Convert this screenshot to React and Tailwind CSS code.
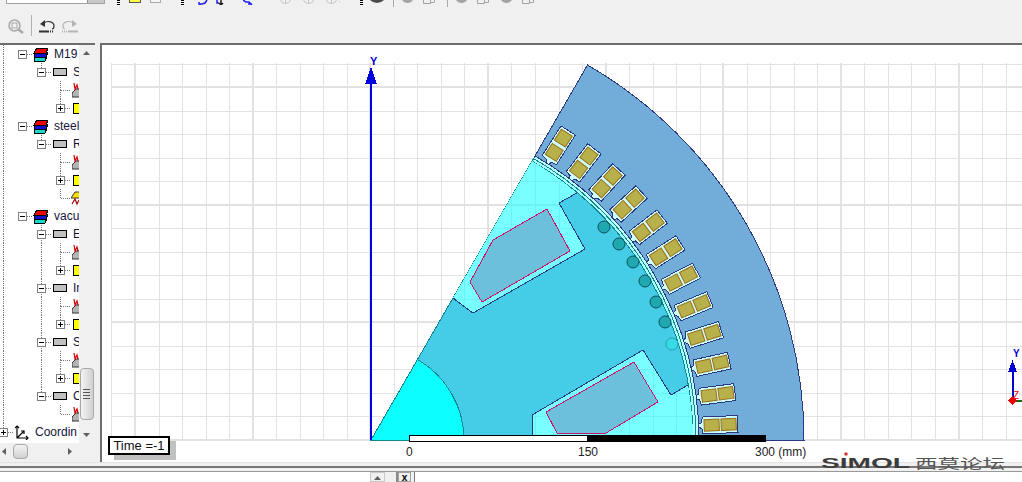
import React from "react";

const CX = 371;
const CY = 440;
const STEP = 23.53;
const font = { fontFamily: '"Liberation Sans", Arial, sans-serif' };

const sector = (r) => {
  const x = CX + r * Math.cos(Math.PI / 3);
  const y = CY - r * Math.sin(Math.PI / 3);
  return `M${CX} ${CY} L${CX + r} ${CY} A${r} ${r} 0 0 0 ${x} ${y} Z`;
};

const upperPocket = "M453 298 L532 161.1 A322 322 0 0 1 577 193 L559 203 L585 249 L473 313 Z";
const lowerPocket = "M533 440 L532 415 L643 350 L671 395 L688 385 A322 322 0 0 1 693 440 Z";

const slotAngles = [2.5, 7.5, 12.5, 17.5, 22.5, 27.5, 32.5, 37.5, 42.5, 47.5, 52.5, 57.5];
const holes = [
  [604, 227],
  [619, 244],
  [633, 262],
  [645, 281],
  [656, 302],
  [665, 322],
];

const gridX = Array.from({ length: 39 }, (_, i) => i - 1);
const gridY = Array.from({ length: 17 }, (_, i) => i);

const GridLines = ({ color }) => (
  <g stroke={color}>
    {gridX.map((k) => (
      <line
        key={"x" + k}
        x1={Math.round(135 + k * STEP) + (k % 5 === 0 ? 0 : 0.5)}
        x2={Math.round(135 + k * STEP) + (k % 5 === 0 ? 0 : 0.5)}
        y1="63"
        y2="441"
        strokeWidth={k % 5 === 0 ? 2 : 1}
      />
    ))}
    {gridY.map((k) => (
      <line
        key={"y" + k}
        x1="111"
        x2="1022"
        y1={Math.round(CY - k * STEP) + (k % 5 === 0 ? 0 : 0.5)}
        y2={Math.round(CY - k * STEP) + (k % 5 === 0 ? 0 : 0.5)}
        strokeWidth={k % 5 === 0 ? 2 : 1}
      />
    ))}
  </g>
);

// coils get shorter and wider towards the top of the section
const Slot = ({ angle }) => {
  const t = (angle - 2.5) / 55;
  const len = 15 - t * 2;
  const wid = 11.5 + t * 1.5;
  return (
    <g transform={`translate(${CX} ${CY}) rotate(${-angle})`}>
      <polygon
        points="328,-1.5 331,-3 332,-8.5 367,-8.5 367,8.5 332,8.5 331,3 328,1.5"
        fill="#ccffff"
        stroke="#2b3a80"
      />
      <g shapeRendering="auto">
        <rect x={341 - len / 2} y={-wid / 2} width={len} height={wid} fill="#b8b04a" stroke="#9a6c14" />
        <rect x={358 - len / 2} y={-wid / 2} width={len} height={wid} fill="#b8b04a" stroke="#9a6c14" />
      </g>
    </g>
  );
};

// the motor section, axes and scale, all in page coordinates
const Drawing = () => (
  <svg
    className="block w-[920px] h-[417px]"
    viewBox="102 45 920 417"
    shapeRendering="crispEdges"
  >
    <defs>
      <clipPath id="pockets">
        <path d={upperPocket} />
        <path d={lowerPocket} />
      </clipPath>
    </defs>
    <GridLines color="#e2e2e2" />

    <path d={sector(433)} fill="#72acd9" stroke="#2b3a80" />
    {slotAngles.map((a) => (
      <Slot key={a} angle={a} />
    ))}
    <path d={sector(328)} fill="#b8ffff" stroke="#2b3a80" />
    <path d={sector(325)} fill="#a8ffff" stroke="#10868e" />
    <path d={sector(322)} fill="#45cde8" stroke="#10868e" />

    <path d={upperPocket} fill="#78ffff" />
    <path d={lowerPocket} fill="#78ffff" />
    <g clipPath="url(#pockets)">
      <GridLines color="#6cf2f4" />
    </g>
    <polyline points="453,298 473,313 585,249 559,203 577,193" fill="none" stroke="#2b3a80" />
    <polyline points="533,440 532,415 643,350 671,395 688,385" fill="none" stroke="#2b3a80" />
    <polygon points="547,209 570,251 482,302 470,282 493,240" fill="#6cc0dc" stroke="#d0106a" />
    <polygon points="634,362 658,402 606,433 557,433 546,412" fill="#6cc0dc" stroke="#d0106a" />

    <path d={sector(93)} fill="#0cffff" stroke="#10868e" />

    <g shapeRendering="auto">
      {holes.map(([x, y]) => (
        <circle key={x} cx={x} cy={y} r="6" fill="#20a8b0" stroke="#0c4f5c" />
      ))}
      <circle cx="672" cy="344" r="6" fill="#38dce6" stroke="#20a0a8" />
    </g>

    <line x1="371" x2="371" y1="80" y2="440" stroke="#0000e0" strokeWidth="2" />
    <polygon points="371,67 377,84 365,84" fill="#0000e0" />
    <text x="370" y="65" fontSize="11" fontWeight="700" fill="#0000e0" style={font} shapeRendering="auto">
      Y
    </text>

    <rect x="409.5" y="435.5" width="178" height="6" fill="#fff" stroke="#000" />
    <rect x="588" y="435" width="178" height="7" fill="#000" />
    <g fontSize="12" fill="#222" style={font}>
      <text x="406" y="456">0</text>
      <text x="578" y="456">150</text>
      <text x="755" y="456">300 (mm)</text>
    </g>

    <line x1="1012" x2="1022" y1="400.5" y2="400.5" stroke="#0a6b0a" strokeWidth="2" />
    <line x1="1012.5" x2="1012.5" y1="368" y2="400" stroke="#0000d0" strokeWidth="2" />
    <polygon points="1012.5,360 1017,372 1008,372" fill="#0000d0" />
    <polygon points="1012.5,396 1017,400.5 1012.5,405 1008,400.5" fill="#f00000" />
    <text x="1013" y="357" fontSize="10" fontWeight="700" fill="#0000d0" style={font}>Y</text>
    <text x="1013" y="399" fontSize="10" fill="#f00000" style={font}>Z</text>
  </svg>
);

const Cell = ({ kind = "" }) => (
  <div className="relative w-[19px] h-[18px] shrink-0">
    {kind.includes("u") && <div className="absolute left-[9px] top-0 h-[9px] border-l border-dotted border-[#777]" />}
    {kind.includes("d") && <div className="absolute left-[9px] top-[9px] h-[9px] border-l border-dotted border-[#777]" />}
    {kind.includes("r") && <div className="absolute left-[10px] top-[9px] w-[9px] border-t border-dotted border-[#777]" />}
    {(kind.includes("m") || kind.includes("p")) && (
      <div className="absolute left-[5px] top-[5px] w-[9px] h-[9px] bg-white border border-[#808080] flex items-center justify-center">
        <div className="relative w-[5px] h-[5px]">
          <div className="absolute left-0 top-[2px] w-[5px] h-[1px] bg-black" />
          {kind.includes("p") && <div className="absolute left-[2px] top-0 w-[1px] h-[5px] bg-black" />}
        </div>
      </div>
    )}
  </div>
);

const MaterialIcon = () => (
  <svg className="w-[16px] h-[15px] shrink-0 ml-[1px]" viewBox="0 0 16 15" shapeRendering="crispEdges">
    <polygon points="1,10 3,9 14,9 12,14 1,14" fill="#18d8c8" stroke="#000" />
    <polygon points="1,7 3,5 15,5 13,10 1,10" fill="#1010d0" stroke="#000" />
    <polygon points="1,6 4,1 15,1 13,6" fill="#f00000" stroke="#000" />
  </svg>
);

const GrayRect = () => <div className="w-[14px] h-[8px] ml-[2px] shrink-0 bg-[#c0c0c0] border border-black" />;

const WaveIcon = () => (
  <svg className="w-[16px] h-[16px] ml-[2px] shrink-0" viewBox="0 0 16 16">
    <polygon points="0,15 0,11 4,7 14,7 14,15" fill="#b4b4b4" stroke="#333" />
    <polyline points="2,1 3,7 5,3 6,7" fill="none" stroke="#d00000" strokeWidth="1.2" />
  </svg>
);

const YellowIcon = () => <div className="w-[14px] h-[11px] ml-[3px] shrink-0 bg-[#ffff00] border border-black" />;

const SweepIcon = () => (
  <svg className="w-[16px] h-[16px] ml-[1px] shrink-0" viewBox="0 0 16 16">
    <polygon points="0,8 4,2 9,2 9,8" fill="#ffe000" stroke="#333" />
    <polyline points="1,14 4,9 6,14 8,10" fill="none" stroke="#a00000" strokeWidth="1.2" />
  </svg>
);

const AxesIcon = () => (
  <svg className="w-[14px] h-[15px] ml-[2px] shrink-0" viewBox="0 0 14 15" fill="none" stroke="#000" strokeWidth="1.2">
    <path d="M2 1 L2 13 L13 13 M2 13 L9 6" />
    <path d="M0 3 L2 1 L4 3 M11 11 L13 13 L11 15 M6 6 L9 6 L9 9" />
  </svg>
);

const Label = ({ gap, children }) => (
  <span className={`${gap} text-[12px] leading-[18px] text-[#14143c] whitespace-nowrap`} style={font}>
    {children}
  </span>
);

const Leaves = ({ col2, last }) => (
  <>
    <div className="flex h-[18px] items-center">
      <Cell kind="ud" />
      <Cell />
      <Cell kind={col2} />
      <Cell kind="udr" />
      <WaveIcon />
    </div>
    <div className="flex h-[18px] items-center">
      <Cell kind="ud" />
      <Cell />
      <Cell kind={last ? "" : col2} />
      <Cell kind="upr" />
      <YellowIcon />
    </div>
  </>
);

const Part = ({ name, kind }) => (
  <div className="flex h-[18px] items-center">
    <Cell kind="ud" />
    <Cell />
    <Cell kind={kind} />
    <GrayRect />
    <Label gap="ml-[6px]">{name}</Label>
  </div>
);

const Material = ({ name }) => (
  <div className="flex h-[18px] items-center">
    <Cell kind="ud" />
    <Cell kind="mr" />
    <MaterialIcon />
    <Label gap="ml-[5px]">{name}</Label>
  </div>
);

const Tree = () => (
  <div className="w-[79px] h-[398px] overflow-hidden bg-white">
    <div className="ml-[-6px]">
      <Material name="M19" />
      <Part name="S" kind="umr" />
      <Leaves col2="" last />
      <Material name="steel" />
      <Part name="R" kind="umr" />
      <Leaves col2="" last />
      <div className="flex h-[18px] items-center">
        <Cell kind="ud" />
        <Cell />
        <Cell />
        <Cell kind="ur" />
        <SweepIcon />
      </div>
      <Material name="vacu" />
      <Part name="E" kind="umrd" />
      <Leaves col2="ud" />
      <Part name="In" kind="umrd" />
      <Leaves col2="ud" />
      <Part name="S" kind="umrd" />
      <Leaves col2="ud" />
      <Part name="C" kind="umr" />
      <div className="flex h-[18px] items-center">
        <Cell kind="ud" />
        <Cell />
        <Cell />
        <Cell kind="ur" />
        <WaveIcon />
      </div>
      <div className="flex h-[18px] items-center">
        <Cell kind="upr" />
        <AxesIcon />
        <Label gap="ml-[6px]">Coordin</Label>
      </div>
    </div>
  </div>
);

const Arrow = ({ dir, className = "" }) => {
  const points = {
    up: "0,4 7,4 3.5,0",
    down: "0,0 7,0 3.5,4",
    left: "4,0 4,7 0,3.5",
    right: "0,0 0,7 4,3.5",
  }[dir];
  const box = dir === "up" || dir === "down" ? "w-[7px] h-[4px]" : "w-[4px] h-[7px]";
  return (
    <svg className={`${box} shrink-0 ${className}`} viewBox={dir === "up" || dir === "down" ? "0 0 7 4" : "0 0 4 7"}>
      <polygon points={points} fill="#606060" />
    </svg>
  );
};

const Grip = ({ className }) => (
  <div className={`${className} w-[3px] flex flex-col gap-[1px] shrink-0`}>
    <div className="h-[1px] bg-black" />
    <div className="h-[1px] bg-black" />
    <div className="h-[1px] bg-black" />
  </div>
);

// disabled tool buttons: only the lower edge of each shows in this strip
const GrayRing = ({ className }) => (
  <svg className={`${className} h-[4px] shrink-0`} viewBox="0 0 11 4" fill="none" stroke="#c4c4c4">
    <path d="M0.5 0 Q1.5 3.5 5.5 3.5 Q9.5 3.5 10.5 0 M5.5 0 V3.5" />
  </svg>
);

const GrayCap = ({ className }) => (
  <svg className={`${className} h-[3px] shrink-0`} viewBox="0 0 11 3">
    <path d="M0 0 H11 Q9 3 5.5 3 Q2 3 0 0 Z" fill="#a4a4a4" />
  </svg>
);

const GrayDoc = ({ className }) => (
  <svg className={`${className} h-[4px] shrink-0`} viewBox="0 0 12 4" fill="none" stroke="#a4a4a4">
    <path d="M0.5 0 V3.5 H7.5 V0 M7.5 2.5 H11.5 V0" />
  </svg>
);

const TopStrip = () => (
  <div className="flex items-start h-[9px] overflow-hidden">
    <div className="ml-[6px] w-[99px] h-[4px] bg-white border-b border-x border-[#a0a0a0] flex justify-end">
      <div className="w-[17px] h-[3px] bg-[#c8c8c8] border-l border-[#909090]" />
    </div>
    <Grip className="ml-[12px]" />
    <div className="ml-[9px] w-[12px] h-[3px] bg-[#ffff40] border-b border-x border-[#555]" />
    <div className="ml-[9px] w-[11px] h-[3px] bg-[#f4f4f4] border-b border-x border-[#aaa]" />
    <Grip className="ml-[20px]" />
    <svg className="ml-[14px] w-[10px] h-[5px] shrink-0" viewBox="0 0 10 5" fill="none" stroke="#2020f0" strokeWidth="1.5">
      <path d="M1 4 L4 4 M9 0 L7 3 L4 4 M1 2 L1 4 L3 5" />
    </svg>
    <svg className="ml-[8px] w-[8px] h-[5px] shrink-0" viewBox="0 0 8 5" fill="none" strokeWidth="1.5">
      <path d="M1 0 V3 H3" stroke="#2020f0" />
      <path d="M5 0 V4 M3 3 L5 5 L7 3" stroke="#202020" />
    </svg>
    <svg className="ml-[19px] w-[10px] h-[5px] shrink-0" viewBox="0 0 10 5" fill="none" stroke="#2020f0" strokeWidth="1.5">
      <path d="M0 0 L3 2 L6 2 L9 5 M5 4 L9 4" />
    </svg>
    <GrayRing className="ml-[27px] w-[11px]" />
    <GrayRing className="ml-[12px] w-[11px]" />
    <GrayRing className="ml-[12px] w-[11px]" />
    <div className="ml-[2px] mt-[1px] w-[1px] h-[1px] bg-[#c4c4c4]" />
    <div className="ml-[0px] w-[0px]" />
    <Grip className="ml-[20px]" />
    <svg className="ml-[7px] w-[14px] h-[3px] shrink-0" viewBox="0 0 14 3">
      <path d="M0 0 H14 Q11 3 7 3 Q3 3 0 0 Z" fill="#4a4a4a" />
    </svg>
    <div className="ml-[9px] w-[1px] h-[7px] bg-[#a8a8a8]" />
    <GrayCap className="ml-[8px] w-[11px]" />
    <GrayDoc className="ml-[10px] w-[12px]" />
    <div className="ml-[12px] w-[1px] h-[7px] bg-[#a8a8a8]" />
    <GrayCap className="ml-[8px] w-[11px]" />
    <GrayDoc className="ml-[10px] w-[12px]" />
    <GrayCap className="ml-[12px] w-[11px]" />
    <GrayDoc className="ml-[10px] w-[12px]" />
  </div>
);

const SecondStrip = () => (
  <div className="flex items-start h-[34px]">
    <svg className="ml-[8px] mt-[10px] w-[16px] h-[15px] shrink-0" viewBox="0 0 16 15" fill="none" stroke="#a8a8a8">
      <circle cx="6.5" cy="6.5" r="5.5" strokeWidth="1.5" />
      <rect x="4" y="4" width="5" height="5" />
      <path d="M10.5 10.5 L15 14" strokeWidth="2.5" />
    </svg>
    <div className="ml-[7px] mt-[6px] w-[1px] h-[21px] bg-[#b0b0b0]" />
    <svg className="ml-[7px] mt-[11px] w-[16px] h-[13px] shrink-0" viewBox="0 0 16 13" fill="none" stroke="#333">
      <path d="M5 3 C9 0 15 2 15 6 C15 8 14 9 13 9" strokeWidth="1.2" />
      <polygon points="1,4 6,0 6,7" fill="#333" stroke="none" />
      <path d="M0 11.5 H10" strokeWidth="2" />
      <path d="M11 11.5 H15" strokeWidth="2" strokeDasharray="1 1" />
    </svg>
    <svg className="ml-[7px] mt-[11px] w-[16px] h-[13px] shrink-0" viewBox="0 0 16 13" fill="none" stroke="#b4b4b4">
      <path d="M11 3 C7 0 1 2 1 6 C1 8 2 9 3 9" strokeWidth="1.2" />
      <polygon points="15,4 10,0 10,7" fill="#b4b4b4" stroke="none" />
      <path d="M6 11.5 H16" strokeWidth="2" />
      <path d="M0 11.5 H5" strokeWidth="2" strokeDasharray="1 1" />
    </svg>
  </div>
);

const Watermark = () => (
  <svg className="absolute left-[815px] top-[448px] w-[200px] h-[26px]" viewBox="0 0 200 26">
    <text x="6" y="20" fontSize="14" fontWeight="700" fill="#3c3c3c" textLength="89" lengthAdjust="spacingAndGlyphs" style={font}>
      SIMOL
    </text>
    <circle cx="31" cy="6" r="1.8" fill="#d83a30" />
    <text
      x="100"
      y="20"
      fontSize="13"
      fill="#555"
      textLength="90"
      lengthAdjust="spacingAndGlyphs"
      style={{ fontFamily: '"Liberation Sans", "Noto Sans CJK SC", sans-serif' }}
    >
      西莫论坛
    </text>
  </svg>
);

export default function App() {
  return (
    <div className="relative w-[1022px] h-[482px] overflow-hidden bg-[#f0f0f0]">
      <div className="h-[43px]">
        <TopStrip />
        <SecondStrip />
      </div>

      <div className="flex h-[419px]">
        <div className="w-[95px] border-t-2 border-[#6d6d6d]">
          <div className="flex">
            <Tree />
            <div className="w-[15px] h-[398px] flex flex-col items-center">
              <Arrow dir="up" className="mt-[6px]" />
              <div className="mt-[313px] w-[14px] h-[52px] rounded-sm border border-[#a8a8a8] bg-gradient-to-r from-[#f4f4f4] to-[#d0d0d0] flex flex-col items-center justify-center gap-[2px]">
                <div className="w-[7px] h-[1px] bg-[#555]" />
                <div className="w-[7px] h-[1px] bg-[#555]" />
                <div className="w-[7px] h-[1px] bg-[#555]" />
                <div className="w-[7px] h-[1px] bg-[#555]" />
              </div>
              <Arrow dir="down" className="mt-[13px]" />
            </div>
          </div>
          <div className="flex items-center w-[79px] h-[17px]">
            <Arrow dir="left" className="ml-[2px]" />
            <div className="ml-[7px] w-[15px] h-[15px] rounded-sm border border-[#a8a8a8] bg-gradient-to-b from-[#f4f4f4] to-[#d0d0d0]" />
            <Arrow dir="right" className="ml-[40px]" />
          </div>
        </div>

        <div className="relative ml-[5px] flex-1 border-t-2 border-l-2 border-[#6d6d6d] bg-white">
          <Drawing />
          <div
            className="absolute left-[6px] top-[391px] w-[62px] h-[19px] bg-white border-2 border-black shadow-[6px_5px_0_#c0c0c0] flex items-center justify-center text-[13px] text-[#111]"
            style={font}
          >
            Time =-1
          </div>
        </div>
      </div>

      <div className="h-[4px] border-t border-[#e2e2e2]" />
      <div className="h-[2px] bg-[#777]" />
      <div className="h-[3px] bg-[#f0f0f0]" />
      <div className="h-[1px] bg-[#999]" />

      <div className="flex h-[10px]">
        <div className="w-[370px] bg-white" />
        <div className="w-[15px] h-[10px] bg-[#f0f0f0] border border-[#c8c8c8] flex justify-center pt-[3px]">
          <Arrow dir="up" />
        </div>
        <div className="w-[13px] border-r-2 border-[#8a8a8a]" />
        <div className="w-[13px] h-[10px] border border-[#a0a0a0] text-[10px] leading-[10px] font-bold text-center text-black" style={font}>
          x
        </div>
        <div className="ml-[3px] flex-1 bg-white border-l border-[#777]" />
      </div>

      <Watermark />
    </div>
  );
}
